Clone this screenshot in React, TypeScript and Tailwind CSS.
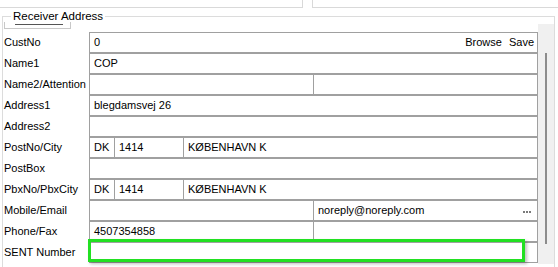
import React from 'react';

type Cell = { text?: string; w?: string; extra?: React.ReactNode };
type Row = { label: string; cells: Cell[]; highlight?: boolean };

const rows: Row[] = [
  {
    label: 'CustNo',
    cells: [
      {
        text: '0',
        extra: (
          <span className="ml-auto pr-[3px] flex gap-[7px]">
            <span>Browse</span>
            <span>Save</span>
          </span>
        ),
      },
    ],
  },
  { label: 'Name1', cells: [{ text: 'COP' }] },
  { label: 'Name2/Attention', cells: [{ w: 'w-[223px]' }, {}] },
  { label: 'Address1', cells: [{ text: 'blegdamsvej 26' }] },
  { label: 'Address2', cells: [{}] },
  { label: 'PostNo/City', cells: [{ text: 'DK', w: 'w-[24px]' }, { text: '1414', w: 'w-[69px]' }, { text: 'KØBENHAVN K' }] },
  { label: 'PostBox', cells: [{}] },
  { label: 'PbxNo/PbxCity', cells: [{ text: 'DK', w: 'w-[24px]' }, { text: '1414', w: 'w-[69px]' }, { text: 'KØBENHAVN K' }] },
  {
    label: 'Mobile/Email',
    cells: [
      { w: 'w-[223px]' },
      {
        text: 'noreply@noreply.com',
        extra: (
          <span className="ml-auto mr-[6px] mt-[2px] flex gap-[1px]">
            <span className="w-[2px] h-[2px] bg-[#7a7a7a]" />
            <span className="w-[2px] h-[2px] bg-[#7a7a7a]" />
            <span className="w-[2px] h-[2px] bg-[#7a7a7a]" />
          </span>
        ),
      },
    ],
  },
  { label: 'Phone/Fax', cells: [{ text: '4507354858', w: 'w-[223px]' }, {}] },
  { label: 'SENT Number', cells: [{}], highlight: true },
];

function FormRow({ row }: { row: Row }) {
  return (
    <div className="flex h-[21px]">
      <div className="w-[86px] pl-[1px] leading-[21px] whitespace-nowrap">{row.label}</div>
      <div className="relative flex flex-1 border border-[#a0a0a0] bg-white">
        {row.cells.map((c, i) => (
          <div
            key={i}
            className={`flex items-center pl-[4px] whitespace-nowrap ${c.w ?? 'flex-1'} ${i > 0 ? 'border-l border-[#a0a0a0]' : ''}`}
          >
            {c.text && <span>{c.text}</span>}
            {c.extra}
          </div>
        ))}
        {row.highlight && (
          <div className="absolute left-[-2px] top-[-4px] w-[437px] h-[23px] border-[3px] border-[#22e022] shadow-[2px_2px_3px_rgba(0,0,0,0.25)]" />
        )}
      </div>
    </div>
  );
}

export default function App() {
  return (
    <div className="w-[558px] h-[267px] bg-white overflow-hidden text-[11px] text-black font-['Liberation_Sans',Arial,sans-serif]">
      {/* top panels */}
      <div className="flex h-[8px] gap-[9px]">
        <div className="w-[303px] border-r border-b border-[#d9d9d9]" />
        <div className="flex-1 border-l border-b border-[#d9d9d9]" />
      </div>

      {/* Receiver address group */}
      <div className="relative mt-[8px] ml-[2px] w-[553px] h-[260px] border border-[#dcdcdc]">
        <span className="absolute left-[8px] top-[-8px] bg-white px-[2px] text-[11.5px] leading-[14px]">
          Receiver Address
        </span>
        <div className="flex pt-[5px]">
          <div className="w-[535px]">
            {/* clipped tab header */}
            <div className="relative ml-[1px] w-[67px] h-[7px] mb-[3px] border-x border-b border-[#c8c8c8]">
              <div className="absolute left-[10px] top-[2px] w-[48px] h-[1px] bg-[#555]" />
            </div>
            {rows.map(r => (
              <FormRow key={r.label} row={r} />
            ))}
          </div>
          {/* scrollbar */}
          <div className="w-[16px] h-[240px] mt-[2px] bg-[#f0f0f0] flex justify-center">
            <div className="mt-[29px] w-[2px] h-[191px] bg-[#8c8c8c]" />
          </div>
        </div>
      </div>
    </div>
  );
}
